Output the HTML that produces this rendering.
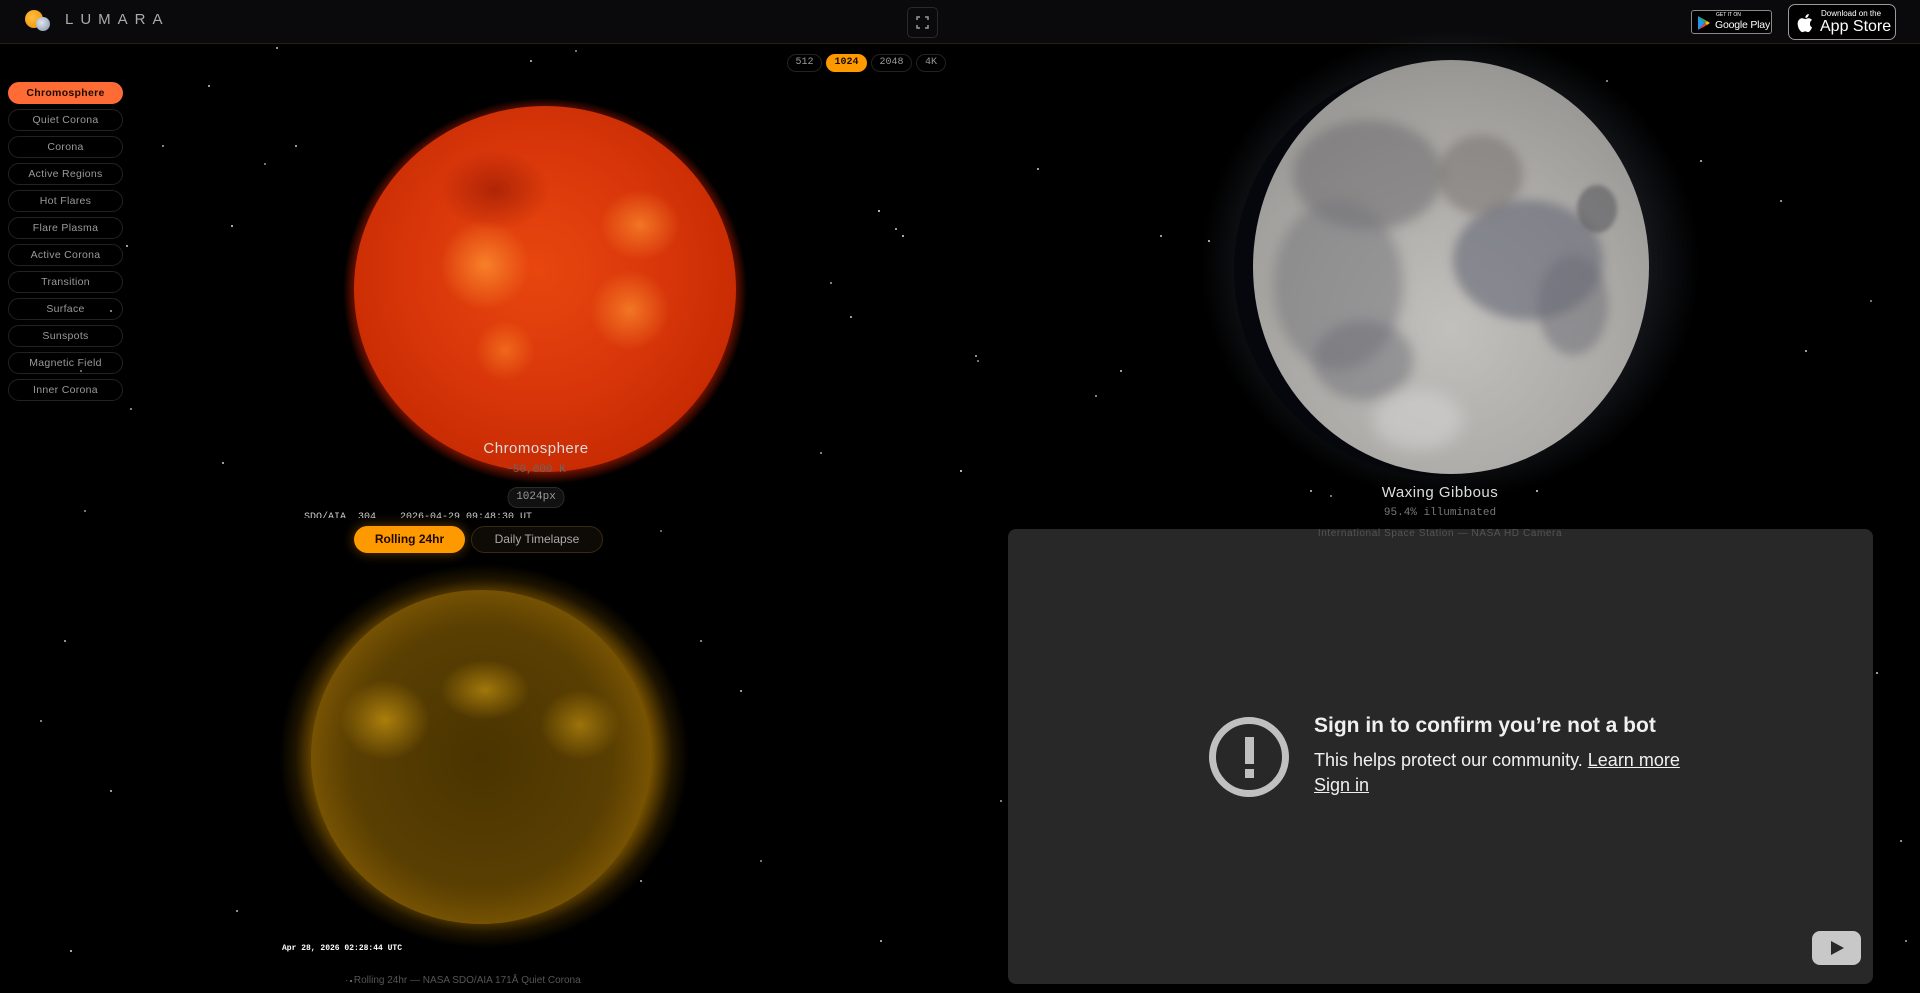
<!DOCTYPE html>
<html><head><meta charset="utf-8"><style>
*{box-sizing:border-box;margin:0;padding:0}
body{width:1920px;height:993px;background:#000;overflow:hidden;position:relative;font-family:"Liberation Sans",sans-serif;color:#ccc}
.hdr{position:absolute;left:0;top:0;width:1920px;height:44px;background:#0a0a0c;border-bottom:1px solid #2a1e12}
.abs{position:absolute}
.stars{position:absolute;left:0;top:0;width:2px;height:2px;border-radius:50%;background:transparent}
.pill{position:absolute;left:8px;width:115px;height:22px;border:1px solid #222;border-radius:11px;font-size:10.5px;color:#9a9a9a;text-align:center;line-height:20px;letter-spacing:.3px}
.pill.on{background:#ff6b35;border-color:#ff6b35;color:#1a0a00;font-weight:bold}
.res{position:absolute;top:54px;height:18px;border:1px solid #222;border-radius:9px;font-family:"Liberation Mono",monospace;font-size:10px;color:#999;text-align:center;line-height:16px}
.c{position:absolute;text-align:center;transform:translateX(-50%);white-space:nowrap}
.m{position:absolute;border-radius:50%}
</style></head><body>
<div class="stars" style="box-shadow:276px 47px 0 #bbb,208px 85px 0 #ccc,162px 145px 0 #aaa,295px 145px 0 #ccc,264px 163px 0 #999,126px 245px 0 #ccc,231px 225px 0 #ddd,110px 310px 0 #aaa,80px 370px 0 #888,130px 408px 0 #aaa,222px 462px 0 #ccc,84px 510px 0 #999,64px 640px 0 #bbb,40px 720px 0 #aaa,110px 790px 0 #ccc,236px 910px 0 #bbb,70px 950px 0 #ddd,350px 980px 0 #888,878px 210px 0 #eee,895px 228px 0 #ccc,830px 282px 0 #aaa,850px 316px 0 #ccc,902px 235px 0 #ddd,820px 452px 0 #aaa,960px 470px 0 #eee,1037px 168px 0 #ccc,1208px 240px 0 #ddd,1160px 235px 0 #ccc,975px 355px 0 #bbb,977px 360px 0 #999,1120px 370px 0 #ccc,1095px 395px 0 #aaa,1310px 490px 0 #ccc,1330px 495px 0 #999,1536px 490px 0 #ddd,1606px 80px 0 #aaa,1700px 160px 0 #ccc,1780px 200px 0 #bbb,1805px 350px 0 #ccc,1870px 300px 0 #999,1876px 672px 0 #ccc,1900px 840px 0 #bbb,1905px 940px 0 #aaa,660px 530px 0 #888,700px 640px 0 #aaa,740px 690px 0 #ccc,760px 860px 0 #999,640px 880px 0 #bbb,1000px 800px 0 #aaa,880px 940px 0 #ccc,530px 60px 0 #ccc,575px 50px 0 #999"></div>
<div class="hdr">
 <div class="abs" style="left:25px;top:10px;width:18px;height:18px;border-radius:50%;background:radial-gradient(circle at 40% 40%,#ffc040,#f08a00)"></div>
 <div class="abs" style="left:36px;top:17px;width:14px;height:14px;border-radius:50%;background:radial-gradient(circle at 40% 40%,#e0e6f0,#8090a8)"></div>
 <div class="abs" style="left:65px;top:11px;font-size:15px;letter-spacing:7px;color:#aaa">LUMARA</div>
 <div class="abs" style="left:907px;top:7px;width:31px;height:31px;border:1px solid #2a2a2a;border-radius:5px">
  <svg width="29" height="29" viewBox="0 0 29 29"><path d="M9 12V9h3M17 9h3v3M20 17v3h-3M12 20H9v-3" stroke="#999" stroke-width="1.5" fill="none"/></svg></div>
 <div class="abs" style="left:1691px;top:10px;width:81px;height:24px;border:1px solid #888;border-radius:3px;background:#000;white-space:nowrap">
  <svg class="abs" style="left:5px;top:4px" width="14" height="16" viewBox="0 0 14 16"><path d="M1 1l7 7-7 7z" fill="#2196f3"/><path d="M1 1l9 5-2 2z" fill="#34a853"/><path d="M1 15l9-5-2-2z" fill="#ea4335"/><path d="M10 6l3 2-3 2-2-2z" fill="#fbbc04"/></svg>
  <div class="abs" style="left:24px;top:1px;font-size:5px;color:#fff">GET IT ON</div>
  <div class="abs" style="left:23px;top:8px;font-size:10.5px;color:#fff;letter-spacing:-.2px">Google Play</div></div>
 <div class="abs" style="left:1788px;top:4px;width:108px;height:36px;border:1px solid #999;border-radius:7px;background:#000;white-space:nowrap">
  <svg class="abs" style="left:8px;top:8px" width="18" height="20" viewBox="0 0 18 20"><path d="M13 10.5c0-2.3 1.9-3.4 2-3.5-1.1-1.6-2.8-1.8-3.4-1.8-1.4-.1-2.8.9-3.5.9s-1.8-.9-3-.8C3.6 5.3 2.2 6.2 1.4 7.6c-1.6 2.8-.4 6.9 1.1 9.2.8 1.1 1.7 2.3 2.8 2.3 1.1 0 1.6-.7 2.9-.7s1.7.7 2.9.7 2-1.1 2.7-2.2c.9-1.3 1.2-2.5 1.2-2.6 0 0-2.3-.9-2-3.8zM10.9 3.7c.6-.7 1-1.7.9-2.7-.9 0-1.9.6-2.5 1.3-.6.6-1.1 1.6-.9 2.6 1 .1 1.9-.5 2.5-1.2z" fill="#fff"/></svg>
  <div class="abs" style="left:32px;top:4px;font-size:8px;color:#fff">Download on the</div>
  <div class="abs" style="left:31px;top:13px;font-size:16px;color:#fff">App Store</div></div>
</div>
<div class="res" style="left:787px;width:35px">512</div>
<div class="res" style="left:826px;width:41px;background:#ff9900;border-color:#ff9900;color:#1a0a00;font-weight:bold">1024</div>
<div class="res" style="left:871px;width:41px">2048</div>
<div class="res" style="left:916px;width:30px">4K</div>
<div class="pill on" style="top:82px">Chromosphere</div>
<div class="pill" style="top:109px">Quiet Corona</div>
<div class="pill" style="top:136px">Corona</div>
<div class="pill" style="top:163px">Active Regions</div>
<div class="pill" style="top:190px">Hot Flares</div>
<div class="pill" style="top:217px">Flare Plasma</div>
<div class="pill" style="top:244px">Active Corona</div>
<div class="pill" style="top:271px">Transition</div>
<div class="pill" style="top:298px">Surface</div>
<div class="pill" style="top:325px">Sunspots</div>
<div class="pill" style="top:352px">Magnetic Field</div>
<div class="pill" style="top:379px">Inner Corona</div>
<!-- red sun -->
<div class="abs" style="left:343px;top:98px;width:404px;height:386px;border-radius:50%;background:radial-gradient(closest-side,#d23008 88%,rgba(200,30,0,.45) 95%,rgba(0,0,0,0) 100%)"></div>
<div class="abs" style="left:354px;top:106px;width:382px;height:366px;border-radius:50%;background:radial-gradient(circle at 48% 45%,#e8460e,#d8360a 45%,#c42800 80%,#b02000)"></div>
<div class="abs" style="left:440px;top:220px;width:90px;height:90px;border-radius:50%;background:radial-gradient(closest-side,rgba(255,150,50,.75),rgba(255,120,30,0))"></div>
<div class="abs" style="left:600px;top:190px;width:80px;height:70px;border-radius:50%;background:radial-gradient(closest-side,rgba(255,150,50,.65),rgba(255,120,30,0))"></div>
<div class="abs" style="left:590px;top:270px;width:80px;height:80px;border-radius:50%;background:radial-gradient(closest-side,rgba(255,150,50,.65),rgba(255,120,30,0))"></div>
<div class="abs" style="left:475px;top:320px;width:60px;height:60px;border-radius:50%;background:radial-gradient(closest-side,rgba(255,140,40,.55),rgba(255,120,30,0))"></div>
<div class="abs" style="left:440px;top:150px;width:110px;height:80px;border-radius:50%;background:radial-gradient(closest-side,rgba(120,10,0,.45),rgba(0,0,0,0))"></div>
<div class="c" style="left:536px;top:440px;font-size:15px;color:#ddd;letter-spacing:.5px">Chromosphere</div>
<div class="c" style="left:536px;top:464px;font-size:11px;color:#666;font-family:'Liberation Mono',monospace">~50,000 K</div>
<div class="c" style="left:536px;top:487px;width:57px;height:21px;border:1px solid #2a2a2a;border-radius:10px;background:#111;font-size:11px;color:#999;line-height:19px;font-family:'Liberation Mono',monospace">1024px</div>
<div class="abs" style="left:304px;top:511px;width:260px;height:7px;overflow:hidden;font-family:'Liberation Mono',monospace;font-size:10px;color:#ccc;line-height:14px;white-space:pre">SDO/AIA  304    2026-04-29 09:48:30 UT</div>
<div class="abs" style="left:354px;top:526px;width:111px;height:27px;border-radius:14px;background:#ff9900;color:#1a0a00;font-size:12px;font-weight:bold;text-align:center;line-height:27px;box-shadow:0 0 12px rgba(255,150,0,.4)">Rolling 24hr</div>
<div class="abs" style="left:471px;top:526px;width:132px;height:27px;border-radius:14px;border:1px solid #3a2a10;background:#0e0a05;color:#aaa;font-size:12px;text-align:center;line-height:25px">Daily Timelapse</div>
<!-- yellow sun -->
<div class="abs" style="left:279px;top:564px;width:410px;height:384px;border-radius:50%;background:radial-gradient(closest-side,rgba(220,150,0,.6) 80%,rgba(150,100,0,.2) 92%,rgba(0,0,0,0))"></div>
<div class="abs" style="left:311px;top:590px;width:340px;height:334px;border-radius:50%;background:radial-gradient(circle at 50% 50%,#4a3400 0%,#5a3f02 55%,#8a6004 82%,#d49a00 97%,#f0b800)"></div>
<div class="abs" style="left:340px;top:680px;width:90px;height:80px;border-radius:50%;background:radial-gradient(closest-side,rgba(240,180,20,.55),rgba(0,0,0,0))"></div>
<div class="abs" style="left:440px;top:660px;width:90px;height:60px;border-radius:50%;background:radial-gradient(closest-side,rgba(240,180,20,.5),rgba(0,0,0,0))"></div>
<div class="abs" style="left:540px;top:690px;width:80px;height:70px;border-radius:50%;background:radial-gradient(closest-side,rgba(240,180,20,.45),rgba(0,0,0,0))"></div>
<div class="abs" style="left:282px;top:944px;font-family:'Liberation Mono',monospace;font-size:8px;font-weight:bold;color:#fff">Apr 28, 2026 02:28:44 UTC</div>
<div class="abs" style="left:345px;top:975px;font-size:10px;color:#555;white-space:nowrap">·&nbsp; Rolling 24hr — NASA SDO/AIA 171Å Quiet Corona</div>
<!-- moon -->
<div class="abs" style="left:1200px;top:30px;width:500px;height:470px;border-radius:50%;background:radial-gradient(closest-side,rgba(90,100,120,.3) 70%,rgba(0,0,0,0))"></div>
<div class="abs" style="left:1234px;top:64px;width:412px;height:412px;border-radius:50%;background:#05070d"></div>
<div class="abs" style="left:1253px;top:60px;width:396px;height:414px;border-radius:50%;overflow:hidden;background:radial-gradient(circle at 50% 65%,#c2c0bc,#aeaca8 45%,#9a9894 78%,#7a7874)">
 <div class="m" style="left:40px;top:60px;width:150px;height:110px;background:rgba(110,108,112,.55);filter:blur(6px)"></div>
 <div class="m" style="left:20px;top:140px;width:130px;height:170px;background:rgba(115,115,122,.5);filter:blur(6px)"></div>
 <div class="m" style="left:200px;top:140px;width:150px;height:120px;background:rgba(100,104,118,.6);filter:blur(5px)"></div>
 <div class="m" style="left:185px;top:75px;width:85px;height:80px;background:rgba(115,110,108,.5);filter:blur(5px)"></div>
 <div class="m" style="left:285px;top:195px;width:70px;height:100px;background:rgba(105,105,115,.5);filter:blur(5px)"></div>
 <div class="m" style="left:60px;top:260px;width:100px;height:80px;background:rgba(110,110,118,.5);filter:blur(6px)"></div>
 <div class="m" style="left:324px;top:125px;width:40px;height:48px;background:rgba(100,100,104,.7);filter:blur(2px)"></div>
 <div class="m" style="left:120px;top:330px;width:90px;height:60px;background:rgba(225,225,228,.4);filter:blur(8px)"></div>
</div>
<div class="c" style="left:1440px;top:484px;font-size:15px;color:#ddd;letter-spacing:.5px">Waxing Gibbous</div>
<div class="c" style="left:1440px;top:507px;font-size:11px;color:#777;font-family:'Liberation Mono',monospace">95.4% illuminated</div>
<!-- youtube -->
<div class="abs" style="left:1008px;top:529px;width:865px;height:455px;border-radius:8px;background:#282828"></div>
<div class="c" style="left:1440px;top:528px;font-size:10px;color:#555;letter-spacing:.6px">International Space Station — NASA HD Camera</div>
<div class="abs" style="left:1209px;top:717px;width:80px;height:80px;border-radius:50%;border:7px solid #c0c0c0"></div>
<div class="abs" style="left:1245px;top:737px;width:9px;height:27px;background:#c0c0c0"></div>
<div class="abs" style="left:1245px;top:769px;width:9px;height:9px;background:#c0c0c0"></div>
<div class="abs" style="left:1314px;top:714px;font-size:21px;font-weight:bold;color:#f0f0f0;white-space:nowrap">Sign in to confirm you’re not a bot</div>
<div class="abs" style="left:1314px;top:750px;font-size:18px;color:#f0f0f0;white-space:nowrap">This helps protect our community. <u>Learn more</u></div>
<div class="abs" style="left:1314px;top:775px;font-size:18px;color:#f0f0f0"><u>Sign in</u></div>
<div class="abs" style="left:1812px;top:931px;width:49px;height:34px;border-radius:8px;background:#c8c8c8"></div>
<svg class="abs" style="left:1829px;top:940px" width="16" height="16" viewBox="0 0 16 16"><path d="M2 1l13 7-13 7z" fill="#282828"/></svg>
</body></html>
